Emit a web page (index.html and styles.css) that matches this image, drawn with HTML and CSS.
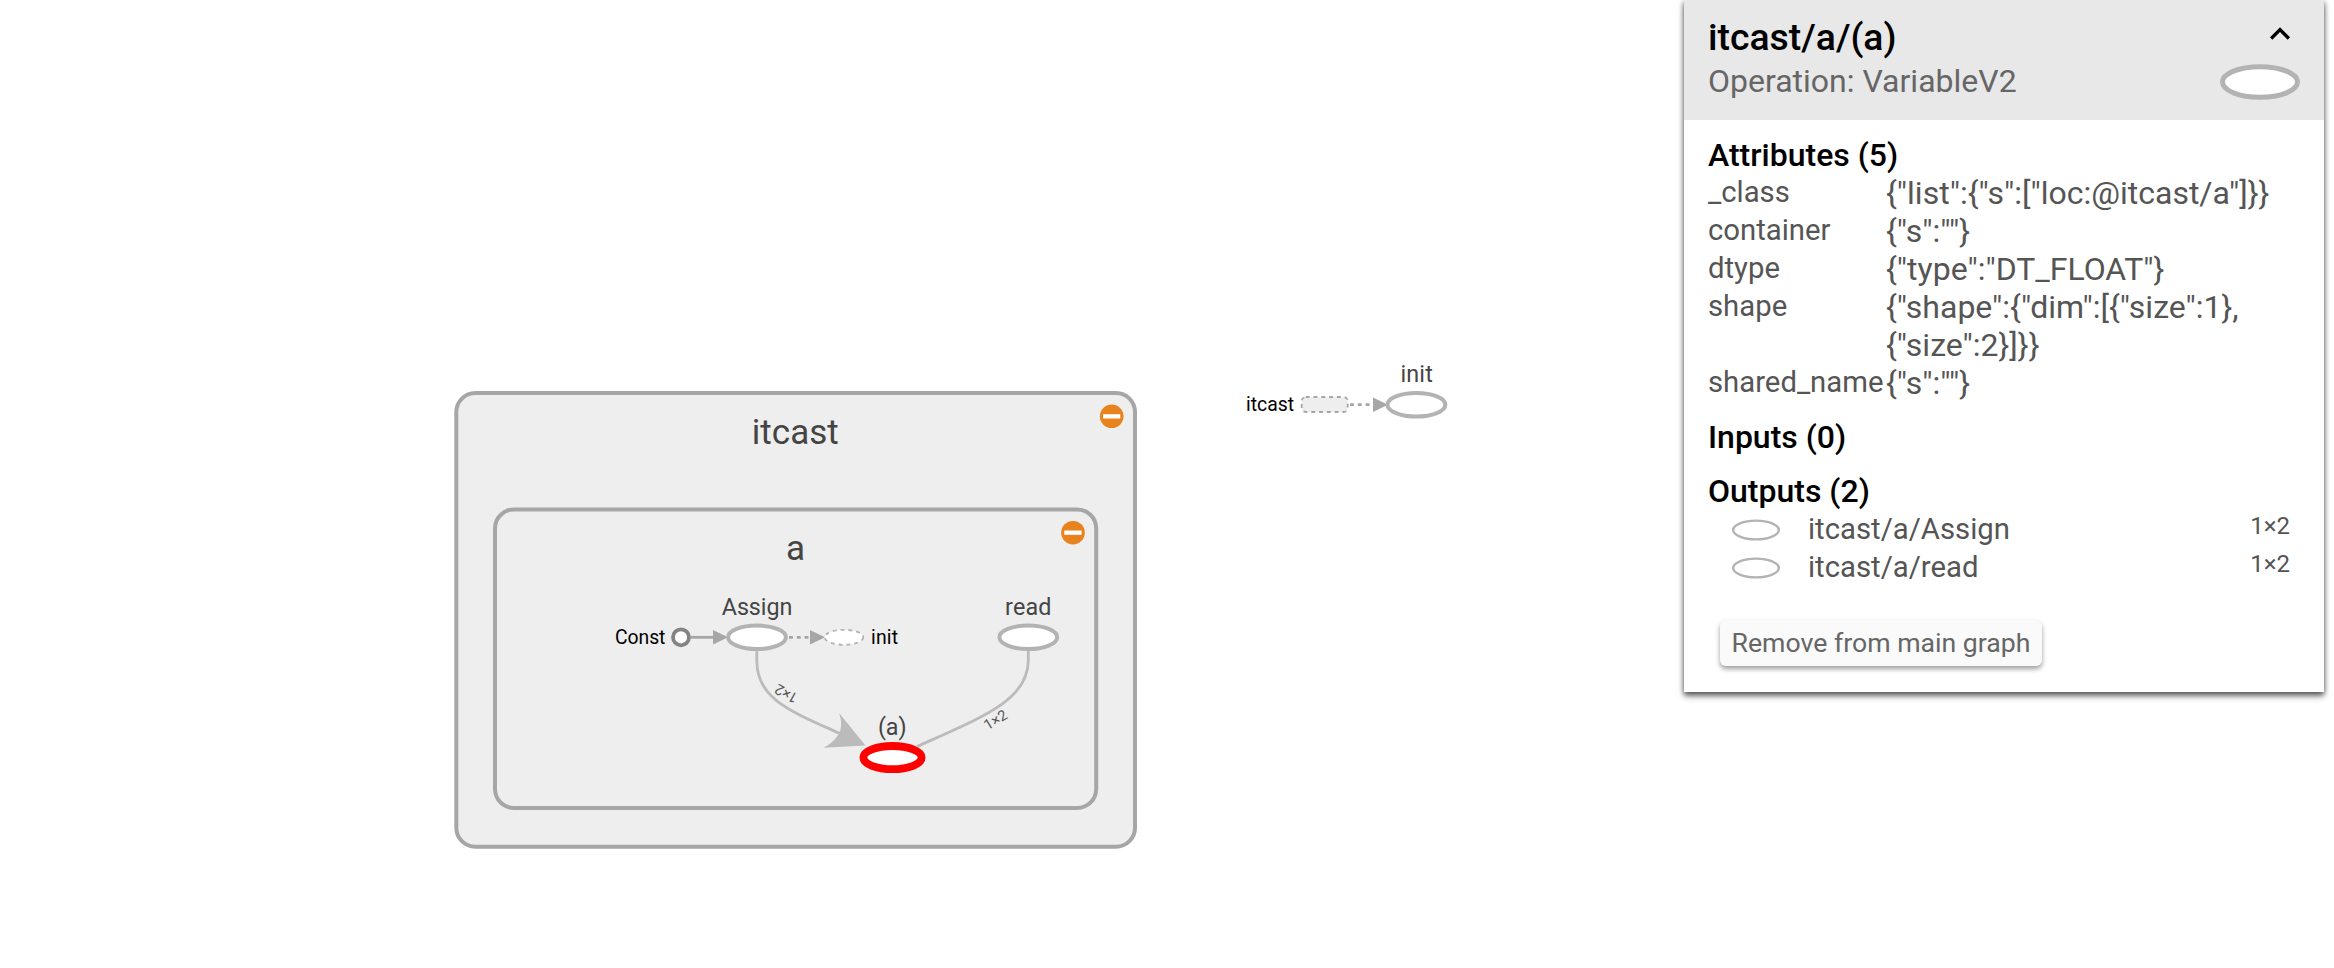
FILE: index.html
```html
<!DOCTYPE html>
<html lang="en">
<head>
<meta charset="utf-8">
<title>Graph</title>
<link rel="stylesheet" href="styles.css">
</head>
<body>
<main class="page">
  <svg class="graph" viewBox="0 0 1680 968" width="1680" height="968">
    <rect class="scope" x="456.3" y="393" width="678.7" height="453.7" rx="19"/>
    <text class="scope-label" x="751.8" y="444" textLength="87">itcast</text>
    <circle class="collapse" cx="1111.7" cy="416.3" r="11.8"/>
    <rect class="minus" x="1103" y="414.2" width="17.3" height="4.3"/>

    <rect class="scope" x="495" y="509.4" width="601.2" height="298.6" rx="19"/>
    <text class="scope-label" x="786" y="560">a</text>
    <circle class="collapse" cx="1073" cy="532.7" r="11.8"/>
    <rect class="minus" x="1064.3" y="530.5" width="17.3" height="4.3"/>

    <path class="edge" d="M756.8 650V661C756.8 699 790 711 841 734"/>
    <path class="edge-head" d="M865.5 745.4L839.3 713.3Q843.5 727 838.5 734.5Q833 743 823.5 747.8Z"/>
    <path class="edge" d="M1028.3 650V660C1028.3 700 985 716 917 746.5"/>
    <text class="edge-label" transform="translate(799 695) rotate(209)" textLength="23.5">1×2</text>
    <text class="edge-label" transform="translate(987.5 730.5) rotate(-31)" textLength="24.5">1×2</text>

    <text class="note" x="615" y="643.8" textLength="50.4">Const</text>
    <circle class="const" cx="681" cy="637.3" r="8"/>
    <path class="ref" d="M691 637.3H714"/>
    <path class="ref-head" d="M713 630l15 7.3-15 7.3z"/>
    <text class="op-label" x="721.8" y="615" textLength="70.5">Assign</text>
    <ellipse class="op" cx="757" cy="637.3" rx="28.9" ry="11.8"/>
    <path class="ref dotted" d="M789 637.3H811"/>
    <path class="ref-head" d="M810 630l15 7.3-15 7.3z"/>
    <ellipse class="op-ghost" cx="844" cy="637.3" rx="19.3" ry="7.5"/>
    <text class="note" x="871" y="643.8" textLength="27">init</text>

    <text class="op-label" x="1005" y="615" textLength="46.5">read</text>
    <ellipse class="op" cx="1028.3" cy="637.3" rx="28.9" ry="11.8"/>

    <text class="op-label" x="878" y="735" textLength="28.5">(a)</text>
    <ellipse class="op selected" cx="892.5" cy="757.6" rx="29.1" ry="11.6"/>

    <text class="note" x="1246" y="411" textLength="48">itcast</text>
    <rect class="scope-ghost" x="1301.7" y="397" width="46" height="15" rx="4"/>
    <path class="ref dotted" d="M1350 404.7H1374"/>
    <path class="ref-head" d="M1373 397.4l15 7.3-15 7.3z"/>
    <ellipse class="op" cx="1416.4" cy="404.7" rx="28.9" ry="11.8"/>
    <text class="op-label" x="1400.5" y="382" textLength="32.3">init</text>
  </svg>

  <aside class="card">
    <header class="card-head">
      <div>
        <h1 class="title">itcast/a/(a)</h1>
        <p class="subtitle">Operation: VariableV2</p>
      </div>
      <div class="head-icons">
        <svg class="chevron" viewBox="0 0 24 24" width="40" height="40"><path d="M12 8l-6 6 1.41 1.41L12 10.83l4.59 4.58L18 14z"/></svg>
        <svg class="head-op" viewBox="0 0 80 36" width="80" height="36"><ellipse cx="40" cy="18" rx="37.5" ry="15.3"/></svg>
      </div>
    </header>
    <div class="card-body">
      <h2 class="section">Attributes (5)</h2>
      <dl class="attrs">
        <dt>_class</dt><dd>{"list":{"s":["loc:@itcast/a"]}}</dd>
        <dt>container</dt><dd>{"s":""}</dd>
        <dt>dtype</dt><dd>{"type":"DT_FLOAT"}</dd>
        <dt>shape</dt><dd>{"shape":{"dim":[{"size":1},<br>{"size":2}]}}</dd>
        <dt>shared_name</dt><dd>{"s":""}</dd>
      </dl>
      <h2 class="section">Inputs (0)</h2>
      <h2 class="section">Outputs (2)</h2>
      <ul class="outputs">
        <li class="output">
          <svg class="out-op" viewBox="0 0 48 22" width="48" height="22"><ellipse cx="24" cy="11" rx="22.8" ry="9.4"/></svg>
          <span class="out-name">itcast/a/Assign</span><span class="shape">1×2</span>
        </li>
        <li class="output">
          <svg class="out-op" viewBox="0 0 48 22" width="48" height="22"><ellipse cx="24" cy="11" rx="22.8" ry="9.4"/></svg>
          <span class="out-name">itcast/a/read</span><span class="shape">1×2</span>
        </li>
      </ul>
      <button class="remove">Remove from main graph</button>
    </div>
  </aside>
</main>
</body>
</html>
```
FILE: styles.css
```css
* { box-sizing: border-box; margin: 0; padding: 0; }
body { background: #fff; font-family: Roboto, sans-serif; overflow: hidden; }
.page { display: flex; align-items: flex-start; width: 2334px; height: 968px; }

.graph { flex: none; display: block; }
.scope { fill: #eee; stroke: #a6a6a6; stroke-width: 4; }
.scope-label { font-size: 35px; fill: #444; }
.collapse { fill: #e7821d; }
.minus { fill: #fff; }
.edge { fill: none; stroke: #bbb; stroke-width: 2.8; }
.edge-head { fill: #bbb; }
.edge-label { font-size: 14.6px; fill: #555; }
.note { font-size: 19.4px; fill: #000; }
.op-label { font-size: 23.3px; fill: #444; }
.op { fill: #fff; stroke: #b3b3b3; stroke-width: 4; }
.selected { stroke: #f00; stroke-width: 7.8; }
.const { fill: #fff; stroke: #848484; stroke-width: 3.8; }
.ref { fill: none; stroke: #a6a6a6; stroke-width: 2.8; }
.dotted { stroke-dasharray: 3.9 3.9; }
.ref-head { fill: #a6a6a6; }
.op-ghost { fill: #fff; stroke: #b3b3b3; stroke-width: 1.8; stroke-dasharray: 3.9 3.9; }
.scope-ghost { fill: #eee; stroke: #a6a6a6; stroke-width: 1.8; stroke-dasharray: 3.9 3.9; }

.card {
  flex: none;
  width: 640px;
  height: 692px;
  margin-left: 4px;
  background: #fff;
  box-shadow: 0 4px 6px rgba(0, 0, 0, .55), 0 1px 5px rgba(0, 0, 0, .35);
}
.card-head {
  display: flex;
  justify-content: space-between;
  height: 120px;
  padding: 16px 24px 0;
  background: #e8e8e8;
}
.title { font-size: 37.33px; line-height: 42px; font-weight: 500; color: #000; }
.subtitle { margin-top: 4px; font-size: 32px; line-height: 38px; color: #666; }
.head-icons { display: flex; flex-direction: column; align-items: flex-end; gap: 10px; margin-top: -2px; }
.chevron { fill: #000; }
.head-op { fill: #fff; stroke: #b3b3b3; stroke-width: 5; }

.card-body { padding: 16px 24px 0; color: #555; }
.section { font-size: 32px; line-height: 38px; font-weight: 500; color: #000; }
.section + .section { margin-top: 16px; }
.attrs { display: grid; grid-template-columns: 178px 1fr; margin-bottom: 16px; }
.attrs dt { font-size: 29.3px; line-height: 36px; white-space: nowrap; }
.attrs dd { font-size: 32px; line-height: 38px; white-space: nowrap; }
.outputs { list-style: none; }
.output { display: flex; height: 38px; padding: 0 10px 0 24px; }
.out-op { margin-top: 9px; fill: #fff; stroke: #b3b3b3; stroke-width: 2.4; }
.out-name { flex: 1; margin-left: 28px; font-size: 29.3px; line-height: 39px; }
.shape { font-size: 24px; line-height: 32px; }
.remove {
  display: block;
  width: 322px;
  height: 46px;
  margin: 34px 0 0 12px;
  border: 0;
  border-radius: 6px;
  background: #fafafa;
  box-shadow: 0 3px 5px rgba(0, 0, 0, .38);
  color: #666;
  font: 26.67px/46px Roboto, sans-serif;
}
```
